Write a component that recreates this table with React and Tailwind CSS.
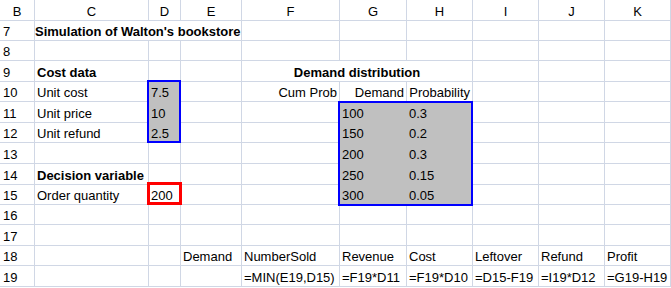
import React from "react";

const cols = ["B", "C", "D", "E", "F", "G", "H", "I", "J", "K"];

// cell content by row number, then column letter
const sheet = {
  7: { C: { t: "Simulation of Walton's bookstore", bold: true, span: 3, tight: true } },
  8: {},
  9: {
    C: { t: "Cost data", bold: true },
    F: { t: "Demand distribution", bold: true, span: 3, center: true },
  },
  10: {
    C: { t: "Unit cost" },
    D: { t: "7.5", fill: true },
    F: { t: "Cum Prob", right: true },
    G: { t: "Demand", right: true },
    H: { t: "Probability", right: true },
  },
  11: {
    C: { t: "Unit price" },
    D: { t: "10", fill: true },
    G: { t: "100", fill: true },
    H: { t: "0.3", fill: true },
  },
  12: {
    C: { t: "Unit refund" },
    D: { t: "2.5", fill: true },
    G: { t: "150", fill: true },
    H: { t: "0.2", fill: true },
  },
  13: {
    G: { t: "200", fill: true },
    H: { t: "0.3", fill: true },
  },
  14: {
    C: { t: "Decision variable", bold: true },
    G: { t: "250", fill: true },
    H: { t: "0.15", fill: true },
  },
  15: {
    C: { t: "Order quantity" },
    D: { t: "200" },
    G: { t: "300", fill: true },
    H: { t: "0.05", fill: true },
  },
  16: {},
  17: {},
  18: {
    E: { t: "Demand" },
    F: { t: "NumberSold" },
    G: { t: "Revenue" },
    H: { t: "Cost" },
    I: { t: "Leftover" },
    J: { t: "Refund" },
    K: { t: "Profit" },
  },
  19: {
    F: { t: "=MIN(E19,D15)" },
    G: { t: "=F19*D11" },
    H: { t: "=F19*D10" },
    I: { t: "=D15-F19" },
    J: { t: "=I19*D12" },
    K: { t: "=G19-H19" },
  },
};

const spanClass = { 1: "", 3: "col-span-3" };

function Row({ num }) {
  const data = sheet[num];
  const out = [];
  let skip = 0;

  cols.forEach((col, i) => {
    if (skip > 0) {
      skip--;
      return;
    }
    if (i === 0) {
      out.push(
        <div key={col} className="flex items-end pb-[1px] pl-[3px] border-r border-b border-[#d0d7e5]">
          {num}
        </div>
      );
      return;
    }
    const cell = data[col];
    if (!cell) {
      out.push(<div key={col} className="border-r border-b border-[#d0d7e5]" />);
      return;
    }
    const span = cell.span || 1;
    skip = span - 1;
    out.push(
      <div
        key={col}
        className={[
          "flex items-end pb-[1px] whitespace-nowrap border-r border-b",
          spanClass[span],
          cell.fill ? "bg-[#c0c0c0] border-[#c0c0c0]" : "border-[#d0d7e5]",
          cell.center ? "justify-center" : cell.right ? "justify-end pr-[2px]" : cell.tight ? "pl-0" : "pl-[2px]",
          cell.bold ? "font-bold" : "",
        ].join(" ")}
      >
        {cell.t}
      </div>
    );
  });

  return out;
}

export default function App() {
  return (
    <div className="relative w-[671px] h-[288px] bg-white overflow-hidden text-black text-[13px] leading-[15px] font-['Liberation_Sans',Arial,sans-serif]">
      <div className="grid grid-cols-[35px_114px_32px_61px_98px_67px_66px_66px_66px_66px] grid-rows-[21px_20px_20px_21px_20px_21px_20px_21px_21px_20px_20px_21px_20px_21px]">
        {/* column letters */}
        {cols.map((c) => (
          <div key={c} className="flex items-end justify-center pb-[1px] border-r border-b border-[#d0d7e5]">
            {c}
          </div>
        ))}

        {Object.keys(sheet).map((n) => (
          <Row key={n} num={n} />
        ))}
      </div>

      {/* range outlines */}
      <div className="absolute left-[147px] top-[80px] w-[34px] h-[63px] border-2 border-[#0000ff]" />
      <div className="absolute left-[338px] top-[101px] w-[135px] h-[105px] border-2 border-[#0000ff]" />
      <div className="absolute left-[147px] top-[182px] w-[35px] h-[23px] border-[3px] border-[#ff0000]" />
    </div>
  );
}
